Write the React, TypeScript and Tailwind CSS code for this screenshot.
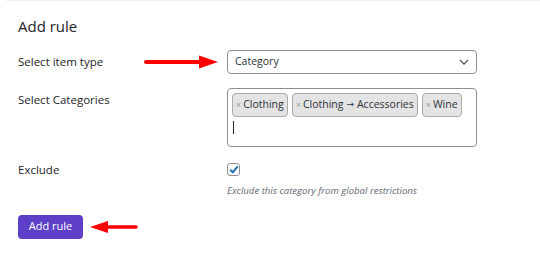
import React from "react";

function RightArrow() {
  return (
    <svg width="76" height="16" viewBox="0 0 76 16" className="block">
      <line x1="3" y1="8" x2="60" y2="8" stroke="#ff0000" strokeWidth="4" strokeLinecap="round" />
      <polygon points="56,1.5 75,8 56,14.5" fill="#ff0000" />
    </svg>
  );
}

function LeftArrow() {
  return (
    <svg width="50" height="14" viewBox="0 0 50 14" className="block">
      <line x1="16" y1="7" x2="47" y2="7" stroke="#ff0000" strokeWidth="3.5" strokeLinecap="round" />
      <polygon points="19,1 1,7 19,13" fill="#ff0000" />
    </svg>
  );
}

function Chip({ children }: { children: React.ReactNode }) {
  return (
    <span className="flex h-[24px] items-center whitespace-nowrap rounded-[4px] border border-[#aaaaaa] bg-[#e4e4e4] px-[3px] text-[10.5px] text-[#2c3338]">
      <span className="mr-[2px] text-[9px] text-[#999999]">×</span>
      {children}
    </span>
  );
}

export default function App() {
  return (
    <div
      className="relative h-[261px] w-[540px] overflow-hidden bg-white text-[#1d2327]"
      style={{ fontFamily: '"Open Sans", sans-serif' }}
    >
      <div className="ml-[6px] h-[1px] bg-[#f0f0f1]" />
      <div className="px-[18px]">
        <h2 className="mt-[15px] text-[15px] font-normal leading-[20px] text-[#1d2327]">Add rule</h2>

        <div className="mt-[14px] flex items-center">
          <div className="flex w-[209px] items-center">
            <span className="w-[125px] text-[11.5px]">Select item type</span>
            <RightArrow />
          </div>
          <div className="flex h-[24px] w-[250px] items-center justify-between rounded-[4px] border border-[#8c8f94] pl-[7px] pr-[8px] text-[10.5px] text-[#2c3338]">
            <span>Category</span>
            <svg width="10" height="6" viewBox="0 0 10 6" className="mr-[-1px]">
              <polyline points="1,1 5,5 9,1" fill="none" stroke="#50575e" strokeWidth="1.3" />
            </svg>
          </div>
        </div>

        <div className="mt-[14px] flex items-start">
          <div className="w-[209px] pt-[3px] text-[11.5px]">Select Categories</div>
          <div className="h-[59px] w-[250px] rounded-[4px] border border-[#8c8f94] px-[4px] pt-[4px]">
            <div className="flex gap-[4px]">
              <Chip>Clothing</Chip>
              <Chip>
                Clothing
                <span className="mx-[3px]" style={{ fontFamily: '"DejaVu Sans", sans-serif', fontSize: "9px" }}>
                  →
                </span>
                Accessories
              </Chip>
              <Chip>Wine</Chip>
            </div>
            <div className="ml-[1px] mt-[4px] h-[13px] w-[1px] bg-[#1d2327]" />
          </div>
        </div>

        <div className="mt-[14px] flex items-center">
          <div className="w-[209px] text-[11.5px]">Exclude</div>
          <div className="flex h-[13px] w-[13px] items-center justify-center rounded-[3px] border border-[#8c8f94] bg-white">
            <svg width="10" height="9" viewBox="0 0 10 9">
              <polyline points="1.2,4.8 3.8,7.2 8.8,1.4" fill="none" stroke="#2271b1" strokeWidth="2" />
            </svg>
          </div>
        </div>
        <div className="ml-[209px] mt-[6px] text-[9.6px] italic text-[#646970]">
          Exclude this category from global restrictions
        </div>

        <div className="mt-[16px] flex items-center">
          <button className="h-[24px] w-[65px] rounded-[4px] bg-[#5e3fc7] text-[11px] text-white">Add rule</button>
          <div className="ml-[6px]">
            <LeftArrow />
          </div>
        </div>
      </div>
    </div>
  );
}
